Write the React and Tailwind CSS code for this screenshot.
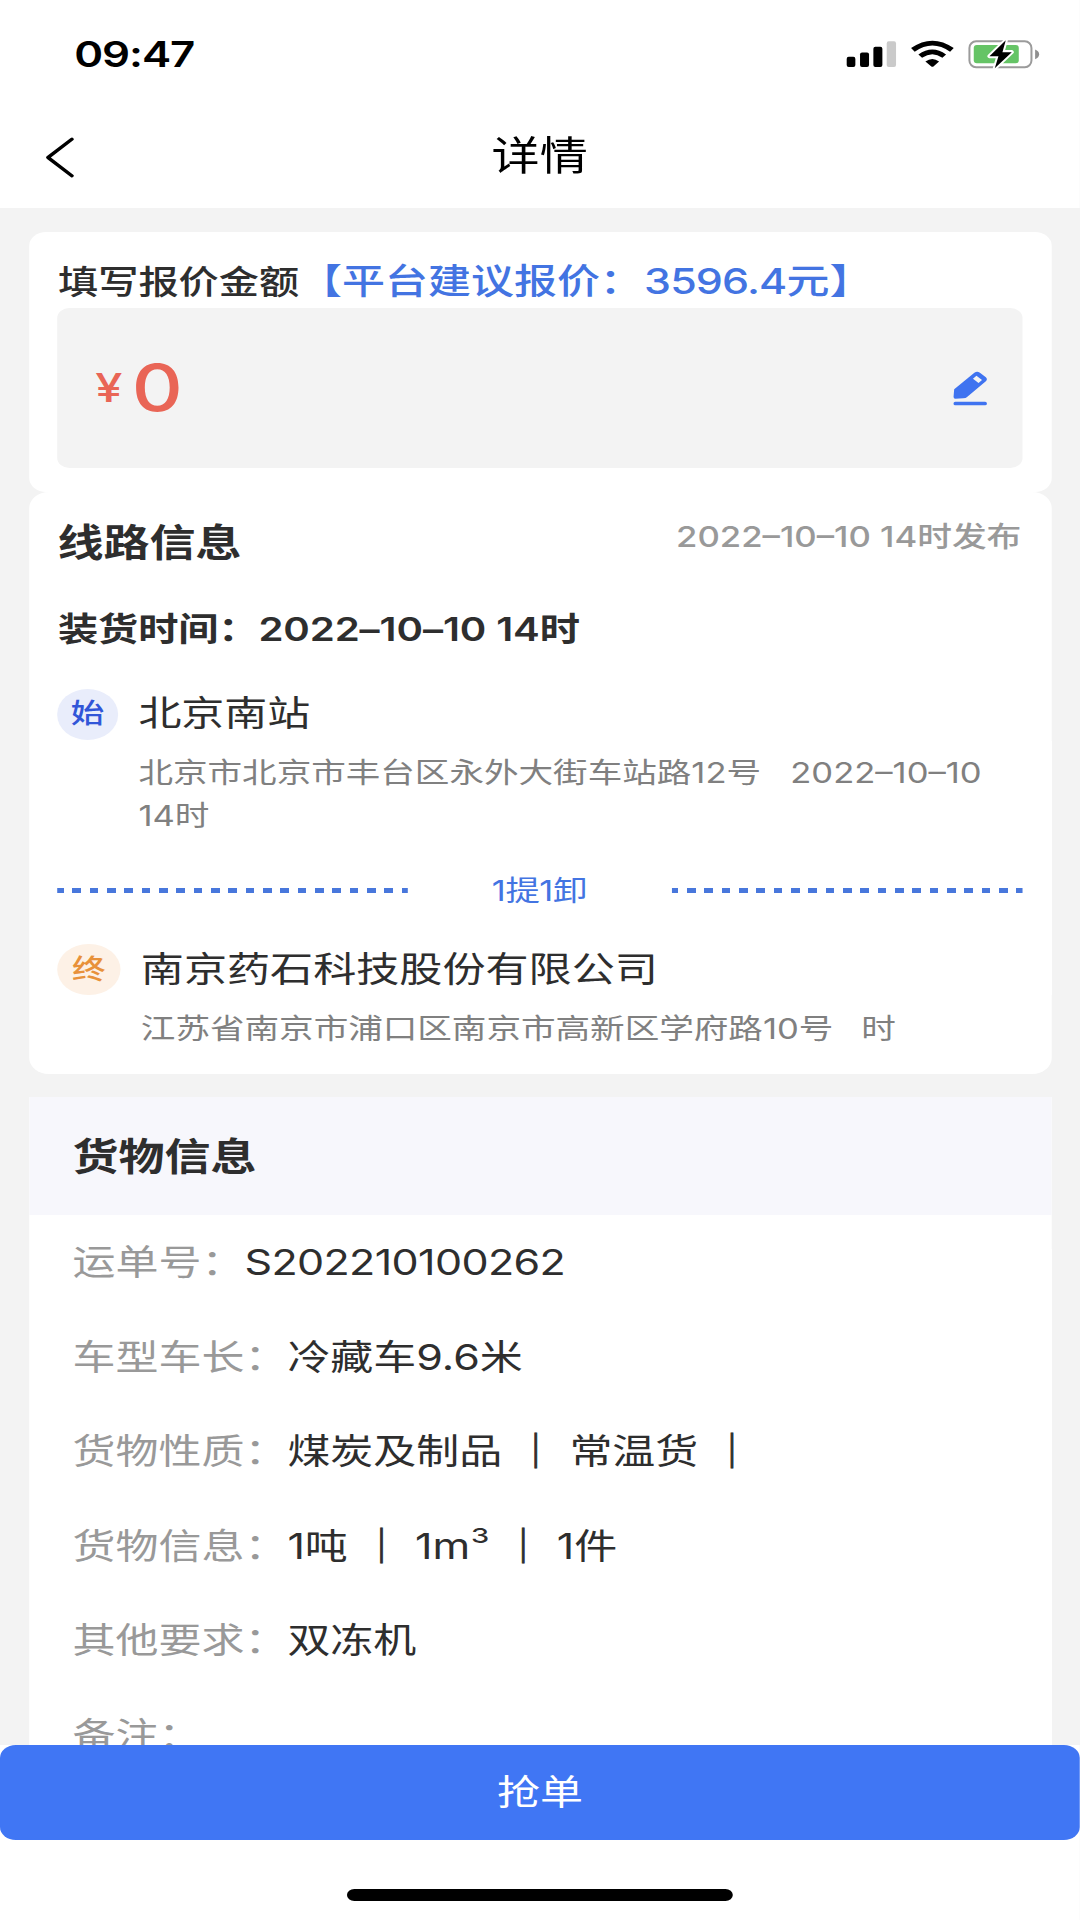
import React from "react";

const SignalIcons = () => (
  <svg className="h-[31px] w-[160px]" viewBox="78 58 584 92" preserveAspectRatio="none">
    <rect x="80" y="111" width="26" height="30" rx="6" />
    <rect x="120" y="98" width="27" height="43" rx="6" />
    <rect x="160" y="81" width="27" height="60" rx="6" />
    <rect x="200" y="65" width="28" height="76" rx="6" fill="#cacaca" />
    <path d="M273 85 Q337 41 401 85 L390 96 Q337 59 284 96 Z" />
    <path d="M295 104 Q337 74 378 104 L367 114 Q337 93 306 114 Z" />
    <path d="M316 125 Q337 109 357 125 L341 139 Q337 142 333 139 Z" />
    <rect x="448" y="65" width="186" height="77" rx="20" fill="none" stroke="#9b9b9b" strokeWidth="6" />
    <path d="M645 89 Q657 94 657 103 Q657 113 645 118 Z" fill="#8f8f8f" />
    <rect x="461" y="76" width="135" height="54" rx="9" fill="#65c466" />
    <path
      d="M557 62 L508 109 L535 109 L524 145 L575 97 L547 97 Z"
      stroke="#fff"
      strokeWidth="12"
      strokeLinejoin="round"
    />
    <path d="M557 62 L508 109 L535 109 L524 145 L575 97 L547 97 Z" />
  </svg>
);

const BackIcon = () => (
  <svg className="h-[43px] w-[25px]" viewBox="0 0 26 44" fill="none" stroke="#000" strokeWidth="3.2" strokeLinecap="round" strokeLinejoin="round">
    <path d="M23 3 L2.5 22 L23 41" />
  </svg>
);

const EditIcon = () => (
  <svg className="h-[35px] w-[28px]" viewBox="1201 451 98 105" preserveAspectRatio="none" fill="#3f73f0">
    <path
      fillRule="evenodd"
      d="M1202 528 L1204 506 L1262 456 Q1270 450 1278 456 L1295 470 Q1301 476 1295 482 L1241 529 Q1238 533 1230 533 L1207 534 Q1202 534 1202 528 Z M1258 474 L1274 487 L1284 478 L1268 465 Z"
    />
    <rect x="1202" y="543" width="96" height="11" rx="5" />
  </svg>
);

const Dashes = () => (
  <div className="h-[5px] w-[288px] bg-[repeating-linear-gradient(90deg,#4877dc_0px,#4877dc_5.2px,transparent_5.2px,transparent_12.44px,#4877dc_12.44px,#4877dc_14.24px)]" />
);

const Bar = () => <span className="[-webkit-text-stroke:0.8px_#2e2e2e]">｜</span>;

const rows = [
  ["运单号：", <span className="tracking-[-0.5px]">S202210100262</span>],
  ["车型车长：", "冷藏车9.6米"],
  ["货物性质：", <>煤炭及制品 <Bar /> 常温货 <Bar /></>],
  ["货物信息：", <>1吨 <Bar /> 1m<span className="text-[37px] font-light leading-none">³</span> <Bar /> 1件</>],
  ["其他要求：", "双冻机"],
  ["备注：", ""],
];

export default function App() {
  return (
    <div className="h-[1920px] w-[1080px] overflow-hidden bg-[#f3f3f3]">
      {/* Layout is authored at 887px wide and widened to fill the window */}
      <div className="flex h-full w-[887.2px] origin-top-left scale-x-[1.2173] flex-col whitespace-nowrap font-['Inter','Noto_Sans_CJK_SC',sans-serif] text-[#2e2e2e]">
        <header className="h-[208px] shrink-0 bg-white text-black">
          <div className="flex h-[108px] items-center justify-between pr-[32px] pl-[61px]">
            <span className="text-[36px] font-semibold tracking-[-0.9px]">09:47</span>
            <SignalIcons />
          </div>
          <div className="grid h-[98px] grid-cols-3 items-center pl-[36.5px] pr-[37px]">
            <BackIcon />
            <h1 className="pb-px text-center text-[39.5px] leading-none">详情</h1>
          </div>
        </header>

        <main className="flex min-h-0 flex-1 flex-col overflow-hidden px-[23.6px] pt-6">
          <section className="h-[260px] shrink-0 rounded-[14px] bg-white px-[23.6px]">
            <div className="flex h-[76px] items-center pt-6 font-medium">
              <span className="pt-px pl-[0.5px] text-[33px]">填写报价金额</span>
              <span className="text-[35.3px] text-[#4374e2]">
                【平台建议报价：<span className="ml-px tracking-[-0.7px]">3596.4</span>元】
              </span>
            </div>
            <div className="flex h-[160px] items-center justify-between rounded-[10px] bg-[#f3f3f3] pr-[29px] pl-[31px] text-[#e96556]">
              <div className="flex items-center">
                <span className="w-[30px] text-[40px] font-medium">¥</span>
                <span className="text-[65px] font-medium">0</span>
              </div>
              <EditIcon />
            </div>
          </section>

          <section className="h-[582px] shrink-0 rounded-[16px] bg-white px-[23.6px]">
            <div className="flex h-[100px] items-center justify-between">
              <h2 className="text-[37.8px] font-bold">线路信息</h2>
              <span className="pr-px pb-[10px] text-[28.5px] font-medium text-[#999]">2022–10–10 14时发布</span>
            </div>
            <div className="flex h-[74px] items-center pt-[2px] pl-[0.5px] text-[33px] font-semibold tracking-[-0.08px]">装货时间：2022–10–10 14时</div>
            <div className="flex h-[85px] items-center pt-[11px]">
              <span className="mr-[17px] flex h-[51px] w-[49.5px] items-center justify-center rounded-full bg-[#e9edfb] text-[27.5px] font-medium text-[#3156d8]">始</span>
              <span className="text-[35.3px]">北京南站</span>
            </div>
            <p className="h-[85px] pt-px pl-[66.5px] text-[28.4px] leading-[42.5px] text-[#808080]">
              北京市北京市丰台区永外大街车站路12号<span className="inline-block w-[24px]" />2022–10–10
              <br />
              14时
            </p>
            <div className="flex h-[107px] items-center justify-between pt-[2px] text-[28.2px] text-[#4374e2]">
              <Dashes />
              <span className="pt-px pr-px tracking-[-0.3px]">1提1卸</span>
              <Dashes />
            </div>
            <div className="flex h-[51px] items-center pt-[2px]">
              <span className="mr-[17px] flex h-[51px] w-[51.5px] shrink-0 items-center justify-center rounded-full bg-[#fdf1e6] text-[27.5px] font-medium text-[#e8913a]">终</span>
              <span className="text-[35.4px]">南京药石科技股份有限公司</span>
            </div>
            <p className="pt-[14px] pl-[68.5px] text-[28.4px] leading-[42px] text-[#808080]">
              江苏省南京市浦口区南京市高新区学府路10号<span className="inline-block w-[23px]" />时
            </p>
          </section>

          <section className="mt-[23px] min-h-0 flex-1 overflow-hidden bg-white">
            <h2 className="flex h-[118px] items-center bg-[#f7f7fc] pl-[36px] text-[37.8px] font-bold">货物信息</h2>
            {rows.map(([label, value]) => (
              <div key={label} className="flex h-[94.5px] items-center pt-[3px] pl-[36px] text-[35.3px]">
                <span className="text-[#999]">{label}</span>
                <span className="whitespace-pre">{value}</span>
              </div>
            ))}
          </section>
        </main>

        <footer className="h-[175px] shrink-0 bg-white">
          <button className="flex h-[95px] w-full items-center justify-center rounded-[13px] bg-[#4076f4] pt-px text-[35.3px] text-white">抢单</button>
          <div className="mx-auto mt-[49px] h-3 w-[317px] rounded-full bg-black" />
        </footer>
      </div>
    </div>
  );
}
